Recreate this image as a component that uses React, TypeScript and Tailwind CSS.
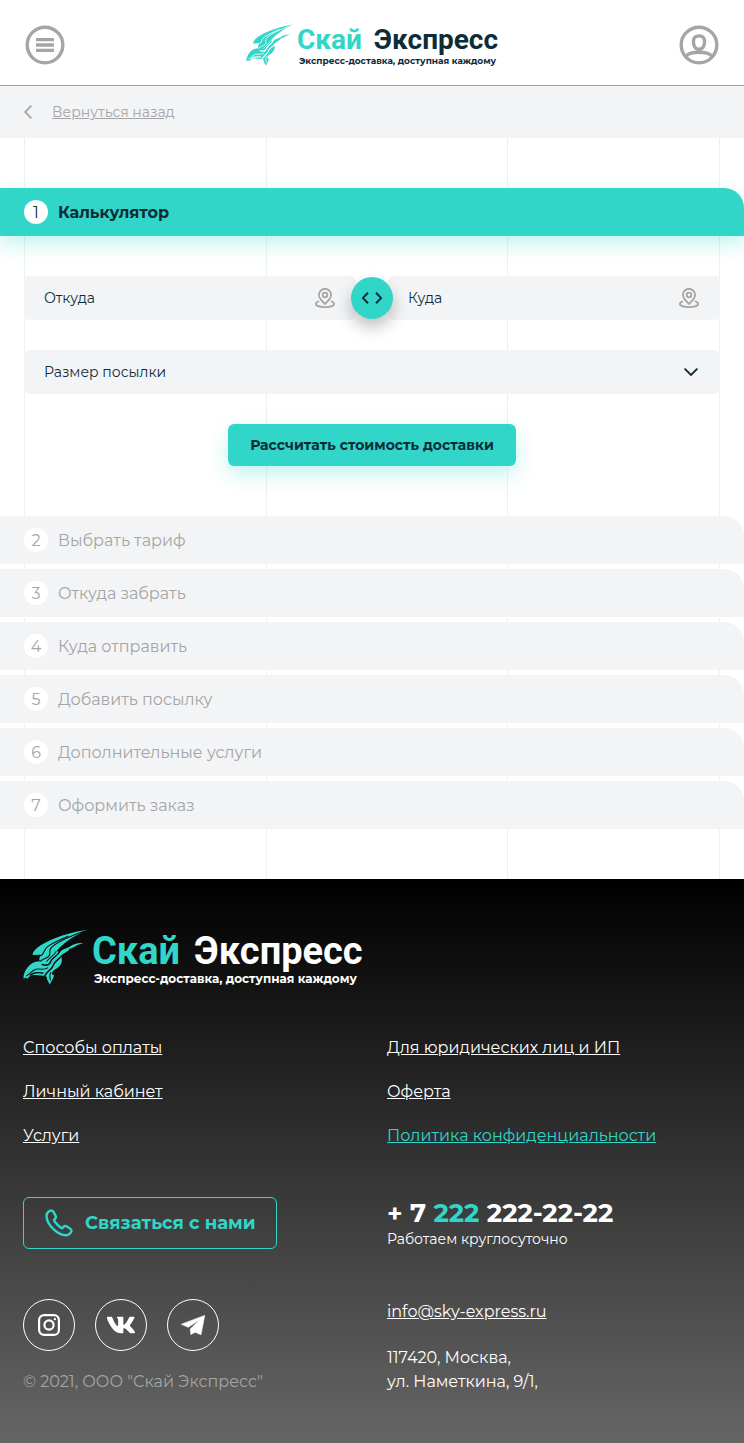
import React from "react";
import { FaVk } from "react-icons/fa";

function Bird({ id, className }: { id: string; className: string }) {
  return (
    <svg viewBox="14 10 196 170" preserveAspectRatio="none" className={className} aria-hidden="true">
      <mask id={id} maskUnits="userSpaceOnUse" x="0" y="0" width="224" height="194">
        <rect width="224" height="194" fill="#fff" />
        <g fill="none" stroke="#000" strokeWidth="3.200" strokeLinecap="round">
          <path d="M202 15C150 34 112 50 98 68C90 78 100 84 92 92C84 100 74 100 66 108" />
          <path d="M150 32C128 42 108 50 90 62C78 70 80 80 70 90" />
          <path d="M126 76C116 96 104 94 98 108C94 120 84 122 72 118" strokeWidth="4.500" />
          <path d="M131 92C120 104 108 108 104 122C100 134 88 136 80 152" strokeWidth="4.500" />
          <path d="M25 152C36 146 40 136 54 132C66 130 78 136 88 128" />
          <path d="M114 78C108 92 94 96 86 108" />
          <path d="M98 142C94 148 94 156 97 164" />
          <path d="M36 150C48 140 60 142 74 144" strokeWidth="4.500" />
        </g>
      </mask>
      <path
        mask={`url(#${id})`}
        fill="#31d6c9"
        d="M209 12C160 18 100 38 70 58C54 68 44 78 43 89L70 88C64 96 60 102 66 108C52 108 42 112 34 120C22 132 14 146 16 162L22 157L27 161C34 153 40 149 50 150L76 152C84 152 88 156 86 162L95 179C98 168 108 162 107 148C102 152 98 146 106 136C124 126 132 116 131 104L130 90C138 82 146 80 154 73L152 70C164 70 172 58 195 53C178 52 166 56 156 63C146 70 134 70 126 78C122 80 118 78 116 76C136 52 170 28 209 12Z"
      />
    </svg>
  );
}

function HeaderLogo() {
  return (
    <a href="#" className="flex items-start gap-[3px]" aria-label="Скай Экспресс">
      <Bird id="bird-header" className="h-[42px] w-12 shrink-0" />
      <span className="block">
        <span className="flex gap-3 text-[28px] leading-8 font-bold [font-family:Roboto,sans-serif]">
          <span className="text-[#31d6c9]">Скай</span>
          <span className="text-[#0d2c38]">Экспресс</span>
        </span>
        <span className="block pl-[2px] text-[9px] leading-[10px] font-bold whitespace-nowrap text-[#0d2c38]">
          Экспресс-доставка, доступная каждому
        </span>
      </span>
    </a>
  );
}

function FooterLogo() {
  return (
    <a href="#" className="flex w-fit items-start gap-1" aria-label="Скай Экспресс">
      <Bird id="bird-footer" className="h-14 w-[65px] shrink-0" />
      <span className="block">
        <span className="flex gap-[14px] text-[38px] leading-[44px] font-bold [font-family:Roboto,sans-serif]">
          <span className="text-[#31d6c9]">Скай</span>
          <span className="text-white">Экспресс</span>
        </span>
        <span className="block pl-[2px] text-xs leading-3 font-bold whitespace-nowrap text-white">
          Экспресс-доставка, доступная каждому
        </span>
      </span>
    </a>
  );
}

function PinIcon() {
  return (
    <svg viewBox="0 0 20 20" className="size-5 shrink-0" fill="none" stroke="#a5a5a5" strokeWidth="1.800" strokeLinecap="round" strokeLinejoin="round" aria-hidden="true">
      <path d="M10 16C7.5 13.4 3.9 10.3 3.9 6.9a6.1 6.1 0 0 1 12.2 0C16.100 10.300 12.500 13.400 10 16Z" />
      <circle cx="10" cy="7" r="2.300" />
      <path d="M3.400 13.500C1.900 13.900 0.900 14.800 0.900 15.900C0.900 17.800 4.900 19.100 10 19.100S19.100 17.800 19.100 15.900C19.100 14.800 18.100 13.900 16.600 13.500" />
    </svg>
  );
}

function PlaceField({ id, label }: { id: string; label: string }) {
  return (
    <label htmlFor={id} className="flex h-11 min-w-0 items-center rounded-md bg-[#f3f4f6] pr-[21px] pl-5">
      <input
        id={id}
        type="text"
        aria-label={label}
        placeholder={label}
        className="h-full min-w-0 flex-1 bg-transparent text-sm text-[#0d2c38] outline-none placeholder:text-[#0d2c38] placeholder:opacity-100"
      />
      <PinIcon />
    </label>
  );
}

const steps = ["Выбрать тариф", "Откуда забрать", "Куда отправить", "Добавить посылку", "Дополнительные услуги", "Оформить заказ"];

const footerLinks = [
  { text: "Способы оплаты", active: false },
  { text: "Для юридических лиц и ИП", active: false },
  { text: "Личный кабинет", active: false },
  { text: "Оферта", active: false },
  { text: "Услуги", active: false },
  { text: "Политика конфиденциальности", active: true },
];

const socialClass = "flex size-[52px] items-center justify-center rounded-full border border-white text-white";

export default function App() {
  return (
    <div className="min-h-screen bg-white text-base text-[#0d2c38] [font-family:Montserrat,Inter,sans-serif]">
      <header className="flex items-center justify-between border-b border-[#a5a5a5] px-[25px] pt-6 pb-[19px]">
        <button type="button" aria-label="Меню">
          <svg viewBox="0 0 40 40" className="size-10" aria-hidden="true">
            <circle cx="20" cy="20" r="17.800" fill="none" stroke="#a5a5a5" strokeWidth="3.400" />
            <path d="M11 13h18v3.300H11zM11 18.200h18v3.500H11zM11 23.700h18v3.300H11z" fill="#a5a5a5" />
          </svg>
        </button>
        <HeaderLogo />
        <button type="button" aria-label="Профиль">
          <svg viewBox="0 0 40 40" className="size-10" fill="none" stroke="#a5a5a5" strokeWidth="3.400" aria-hidden="true">
            <circle cx="20" cy="20" r="17.800" />
            <path d="M20 10.900c3.500 0 5.600 2.100 5.600 5.300 0 4.600-1.900 8.100-5.600 8.100s-5.600-3.500-5.600-8.100c0-3.200 2.100-5.300 5.600-5.300Z" />
            <path d="M7 31C12 26 28 26 33 31" />
          </svg>
        </button>
      </header>

      <nav className="flex h-[52px] items-center bg-[#f3f4f6] px-6">
        <a href="#" className="flex items-center gap-5 text-sm text-[#a5a5a5]">
          <svg viewBox="0 0 8 14" className="h-[14px] w-2" fill="none" stroke="#a5a5a5" strokeWidth="1.800" aria-hidden="true">
            <path d="M7.400 0.700L1.200 7l6.200 6.300" />
          </svg>
          <span className="underline">Вернуться назад</span>
        </a>
      </nav>

      <main className="relative py-[50px]">
        <div aria-hidden="true" className="absolute inset-0 grid grid-cols-[242fr_241fr_213fr] px-6">
          <div className="border-l border-[#eff0f1]" />
          <div className="border-l border-[#eff0f1]" />
          <div className="border-x border-[#eff0f1]" />
        </div>

        <div className="relative">
          <h1 className="flex h-12 items-center gap-[10px] rounded-tr-[20px] bg-[#31d6c9] px-6 leading-[26px] font-bold shadow-[0_8px_20px_rgba(49,214,201,0.3)]">
            <span className="flex size-6 items-center justify-center rounded-full bg-white pt-px font-normal">1</span>
            <span className="pt-px">Калькулятор</span>
          </h1>

          <form className="px-6 pt-10 pb-[50px]" onSubmit={(e) => e.preventDefault()}>
            <div className="relative grid grid-cols-2 gap-8">
              <PlaceField id="from" label="Откуда" />
              <PlaceField id="to" label="Куда" />
              <button
                type="button"
                aria-label="Поменять местами"
                className="absolute top-1/2 left-1/2 flex size-[42px] -translate-x-1/2 -translate-y-1/2 items-center justify-center rounded-full bg-[#31d6c9] shadow-[0_8px_16px_rgba(0,0,0,0.25)]"
              >
                <svg viewBox="0 0 20 12" className="h-3 w-5" fill="none" stroke="#0d2c38" strokeWidth="2" aria-hidden="true">
                  <path d="M6 0.800L0.800 6L6 11.200M14 0.800L19.200 6L14 11.200" />
                </svg>
              </button>
            </div>

            <div className="relative mt-[30px]">
              <select
                id="size"
                aria-label="Размер посылки"
                defaultValue=""
                className="block h-11 w-full appearance-none rounded-md bg-[#f3f4f6] px-5 text-sm text-[#0d2c38]"
              >
                <option value="">Размер посылки</option>
              </select>
              <svg viewBox="0 0 14 8" className="pointer-events-none absolute top-[18px] right-[22px] h-2 w-[14px]" fill="none" stroke="#0d2c38" strokeWidth="1.800" aria-hidden="true">
                <path d="M0.600 0.600L7 7l6.400-6.400" />
              </svg>
            </div>

            <div className="mt-[30px] flex justify-center">
              <button type="submit" className="h-[42px] rounded-md bg-[#31d6c9] px-[22px] text-sm font-bold shadow-[0_8px_20px_rgba(49,214,201,0.3)]">
                Рассчитать стоимость доставки
              </button>
            </div>
          </form>

          <ol className="flex flex-col gap-[5px]">
            {steps.map((step, i) => (
              <li key={step} className="flex h-12 items-center gap-[10px] rounded-tr-[20px] bg-[#f3f4f6] px-6 leading-[26px] text-[#a5a5a5]">
                <span className="flex size-6 items-center justify-center rounded-full bg-white pt-px">{i + 2}</span>
                <span className="pt-px">{step}</span>
              </li>
            ))}
          </ol>
        </div>
      </main>

      <footer className="bg-linear-to-b/srgb from-black to-[#666666] px-[23px] py-[50px] text-white">
        <FooterLogo />

        <ul className="mt-[50px] grid grid-cols-2 gap-x-[30px] gap-y-[18px] leading-[26px]">
          {footerLinks.map((link) => (
            <li key={link.text}>
              <a href="#" className={link.active ? "text-[#31d6c9] underline" : "underline"}>{link.text}</a>
            </li>
          ))}
        </ul>

        <div className="mt-12 grid grid-cols-2 gap-x-[30px] gap-y-[50px]">
          <div>
            <button type="button" className="flex h-[52px] items-center gap-3 rounded-md border border-[#31d6c9] px-[21px] text-lg font-bold text-[#31d6c9]">
              <svg viewBox="0 0 28 28" className="size-7" fill="none" stroke="currentColor" strokeWidth="2.400" strokeLinejoin="round" aria-hidden="true">
                <path d="M6.600 1.600C5 1.200 1.400 3.400 1.500 6.800C1.700 12 5 17 8.500 20.200C12 23.600 17 26.500 21.500 26.300C25 25.800 27 22.600 26.300 21C26 20.200 25 19.600 24.500 19.300L21.500 17.300C20.500 16.700 19.300 17 18.500 17.900L17.300 19.200C15.500 19 9.300 13 9 11L10.200 9.600C11 8.700 11 7.500 10.400 6.400L8.400 2.800C8 2.100 7.400 1.700 6.600 1.600Z" />
              </svg>
              Связаться с нами
            </button>
          </div>
          <div>
            <p className="text-[26px] leading-8 font-bold">
              + 7 <span className="text-[#31d6c9]">222</span> 222-22-22
            </p>
            <p className="text-sm leading-5">Работаем круглосуточно</p>
          </div>

          <div>
            <div className="flex gap-5">
              <a href="#" aria-label="Instagram" className={socialClass}>
                <svg viewBox="0 0 22 22" className="size-[22px]" fill="none" stroke="currentColor" strokeWidth="2.200" aria-hidden="true">
                  <rect x="1.100" y="1.100" width="19.800" height="19.800" rx="5" />
                  <circle cx="11" cy="11" r="4.600" />
                  <circle cx="16.900" cy="5.100" r="1.200" fill="currentColor" stroke="none" />
                </svg>
              </a>
              <a href="#" aria-label="ВКонтакте" className={socialClass}>
                <FaVk size={30} />
              </a>
              <a href="#" aria-label="Telegram" className={socialClass}>
                <svg viewBox="0 0 24 20" className="h-5 w-6" fill="currentColor" stroke="currentColor" strokeWidth="0.600" strokeLinejoin="round" aria-hidden="true">
                  <path d="M0.400 9.200L23.700 0.400L20 19.700L14.200 17.300L9.900 19.600L9.200 14L19 4.600L7.200 12.300Z" />
                </svg>
              </a>
            </div>
            <p className="mt-[18px] leading-[26px] text-[#a5a5a5]">© 2021, ООО "Скай Экспресс"</p>
          </div>
          <div className="leading-[26px]">
            <a href="mailto:info@sky-express.ru" className="underline">info@sky-express.ru</a>
            <address className="mt-[21px] leading-6 not-italic">
              117420, Москва,
              <br />
              ул. Наметкина, 9/1,
            </address>
          </div>
        </div>
      </footer>
    </div>
  );
}
